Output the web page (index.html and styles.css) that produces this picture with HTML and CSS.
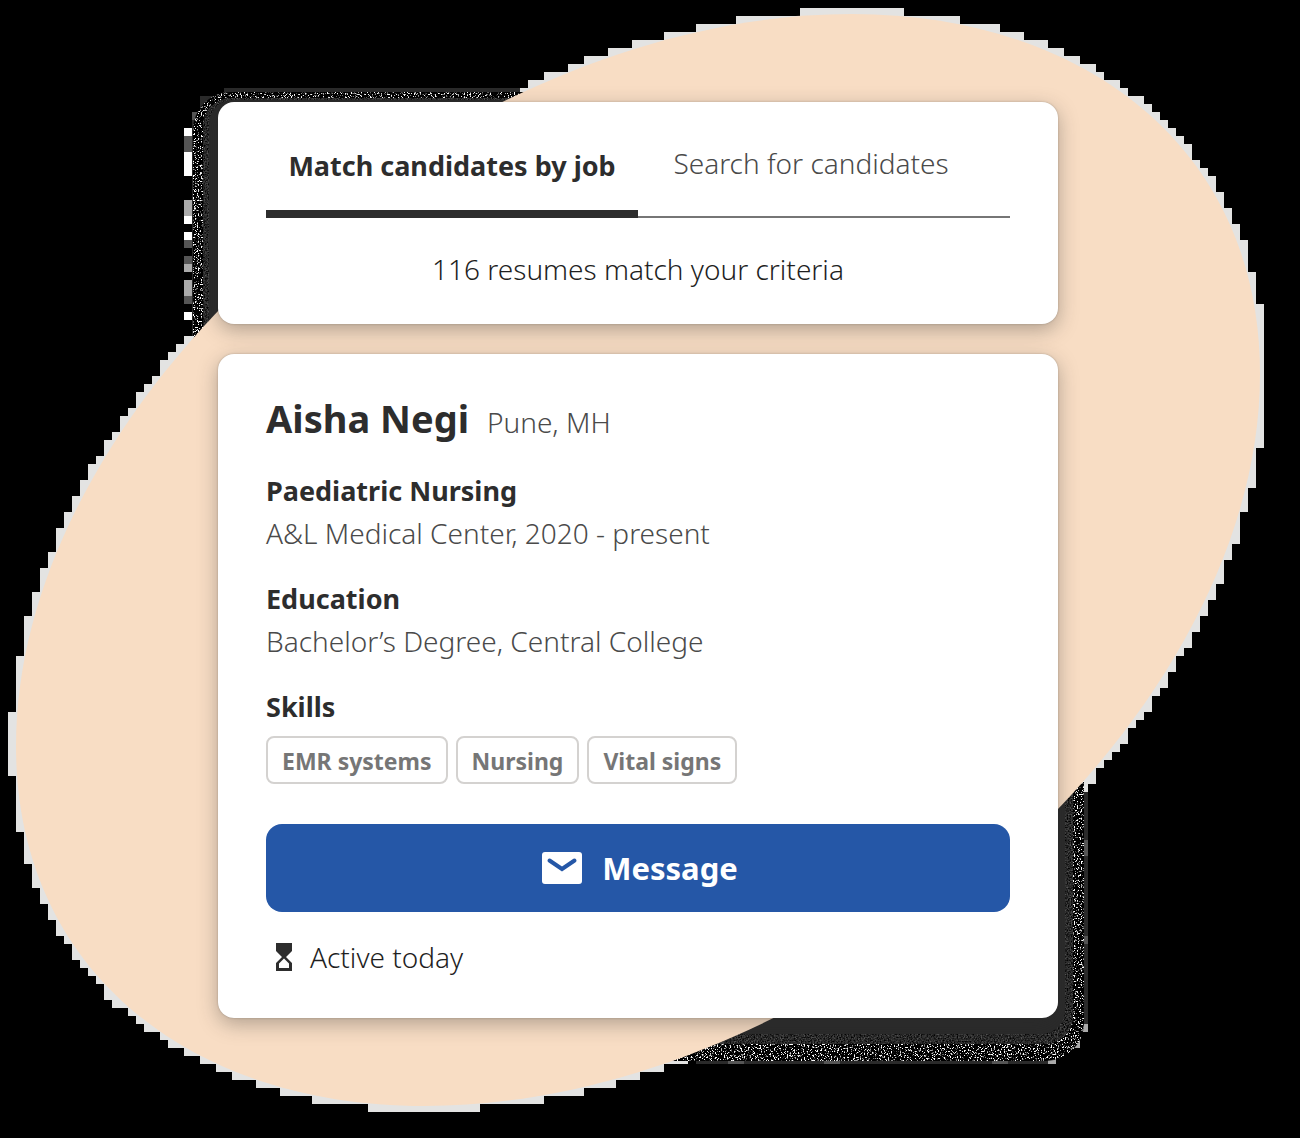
FILE: index.html
```
<!DOCTYPE html>
<html lang="en">
<head>
<meta charset="utf-8">
<meta name="viewport" content="width=device-width, initial-scale=1">
<title>Match candidates</title>
<link rel="stylesheet" href="styles.css">
</head>
<body>
<main class="stage">
  <svg class="backdrop" viewBox="0 0 1300 1138" aria-hidden="true">
    <defs>
      <filter id="grain" x="0" y="0" width="1300" height="1138" filterUnits="userSpaceOnUse" color-interpolation-filters="sRGB">
        <feTurbulence type="fractalNoise" baseFrequency="0.7" numOctaves="2" seed="4"/>
        <feColorMatrix type="matrix" values="9 0 0 0 -5  9 0 0 0 -5  9 0 0 0 -5  0 0 0 0 1"/>
        <feComposite in2="SourceGraphic" operator="in"/>
      </filter>
      <filter id="soft-grain" x="0" y="0" width="1300" height="1138" filterUnits="userSpaceOnUse" color-interpolation-filters="sRGB">
        <feTurbulence type="fractalNoise" baseFrequency="0.7" numOctaves="2" seed="9"/>
        <feColorMatrix type="matrix" values="0.6 0 0 0 -0.14  0.6 0 0 0 -0.14  0.6 0 0 0 -0.14  0 0 0 0 1"/>
        <feComposite in2="SourceGraphic" operator="in"/>
      </filter>
    </defs>
    <g class="steps" id="steps" shape-rendering="crispEdges"></g>
    <g shape-rendering="crispEdges">
      <path fill="#2a2a2a" d="M224 88H520V96H224ZM200 96H224V112H200ZM192 112H200V336H192ZM1080 792H1088V1032H1080ZM1072 1032H1080V1048H1072ZM696 1056H1056V1064H696Z"/>
      <path fill="#555" d="M184 136h8v16h-8zM184 240h8v8h-8zM184 256h8v8h-8zM184 296h8v8h-8zM192 112h8v8h-8zM1080 840h8v16h-8zM1080 936h8v8h-8zM728 1056h16v8h-16zM824 1056h16v8h-16zM992 1056h16v8h-16z"/>
      <path fill="#aaa" d="M184 200h8v16h-8zM184 264h8v8h-8zM184 280h8v16h-8zM1080 1024h8v8h-8zM1072 1040h8v8h-8zM1048 1056h8v8h-8z"/>
      <path fill="#fff" d="M184 128h8v8h-8zM184 152h8v24h-8zM184 216h8v8h-8zM184 232h8v8h-8zM184 312h8v8h-8z"/>
    </g>
    <rect x="193" y="92" width="891" height="969" rx="38" filter="url(#grain)"/>
    <rect x="203" y="98" width="870" height="946" rx="28" filter="url(#soft-grain)"/>
    <rect x="209" y="100" width="856" height="934" rx="24" fill="#2a2a2a"/>
    <path class="blob" id="blob" d="M852 14C1083 14 1260 147 1260 374C1260 730 820 1106 424 1106C193 1106 16 973 16 746C16 390 456 14 852 14Z"/>
  </svg>

  <section class="card card-search">
    <div class="tabs" role="tablist">
      <button class="tab tab-active" type="button" role="tab" aria-selected="true">Match candidates by job</button>
      <button class="tab" type="button" role="tab" aria-selected="false">Search for candidates</button>
    </div>
    <p class="result">116 resumes match your criteria</p>
  </section>

  <article class="card card-profile">
    <header class="person">
      <h1 class="name">Aisha Negi</h1>
      <span class="detail">Pune, MH</span>
    </header>
    <section class="entry">
      <h2 class="label">Paediatric Nursing</h2>
      <p class="detail">A&amp;L Medical Center, 2020 - present</p>
    </section>
    <section class="entry">
      <h2 class="label">Education</h2>
      <p class="detail">Bachelor’s Degree, Central College</p>
    </section>
    <section class="entry">
      <h2 class="label">Skills</h2>
      <ul class="skills">
        <li class="skill">EMR systems</li>
        <li class="skill">Nursing</li>
        <li class="skill">Vital signs</li>
      </ul>
    </section>
    <button class="message" type="button">
      <svg width="40" height="32" viewBox="0 0 40 32" aria-hidden="true">
        <rect width="40" height="32" rx="3" fill="#fff"/>
        <path d="M7.500 8.500L20 17L32.500 8.500" fill="none" stroke="#2557a7" stroke-width="4" stroke-linecap="round"/>
      </svg>
      <span>Message</span>
    </button>
    <p class="activity">
      <svg width="16" height="28" viewBox="0 0 16 28" aria-hidden="true">
        <path fill="#2d2d2d" fill-rule="evenodd" d="M0 0H16V8L10 14L16 20V28H0V20L6 14L0 8ZM8 15.500L3 20.500V25H13V20.500Z"/>
      </svg>
      <span>Active today</span>
    </p>
  </article>
</main>
<script src="steps.js"></script>
</body>
</html>
```
FILE: steps.js
```
// Draws the stepped rim: every 8px cell that the blob touches.
const blob = document.getElementById('blob');
const steps = document.getElementById('steps');
const cell = 8;
const ns = 'http://www.w3.org/2000/svg';
const total = blob.getTotalLength();
const rows = new Map();
for (let d = 0; d < total; d += 1) {
  const p = blob.getPointAtLength(d);
  const row = Math.floor(p.y / cell);
  const from = Math.floor((p.x - 1) / cell);
  const to = Math.floor((p.x + 1) / cell);
  const span = rows.get(row) || [from, to];
  rows.set(row, [Math.min(span[0], from), Math.max(span[1], to)]);
}
let path = '';
rows.forEach(([from, to], row) => {
  path += `M${from * cell} ${row * cell}H${(to + 1) * cell}v${cell}H${from * cell}Z`;
});
const shape = document.createElementNS(ns, 'path');
shape.setAttribute('d', path);
steps.appendChild(shape);
```
FILE: styles.css
```
* { box-sizing: border-box; }

body {
  margin: 0;
  background: #000;
  color: #2d2d2d;
  font-family: "Noto Sans", "Open Sans", sans-serif;
  font-size: 28px;
  font-weight: 300;
  line-height: 42px;
}

h1, h2, p, ul { margin: 0; padding: 0; }
svg { display: block; }
button { font: inherit; border: 0; cursor: pointer; }

.stage {
  position: relative;
  display: flex;
  flex-direction: column;
  gap: 30px;
  min-height: 100vh;
  padding: 102px 242px 120px 218px;
}

.backdrop {
  position: absolute;
  top: 0;
  left: 0;
  width: 100%;
}

.blob { fill: #f8ddc4; }
.steps { fill: #e3e3e2; }

.card {
  position: relative;
  background: #fff;
  border-radius: 16px;
  box-shadow: 0 0 2px rgba(45, 45, 45, 0.3), 0 6px 20px rgba(45, 45, 45, 0.35);
}

.card-search { padding: 24px 48px 34px; }

.tabs { display: grid; grid-template-columns: 1fr 1fr; }

.tab {
  height: 92px;
  padding: 0 26px 16px 0;
  background: none;
  border-bottom: 2px solid #767676;
  color: #4a4a4a;
  white-space: nowrap;
}

.tab-active {
  padding: 0 0 4px;
  border-bottom: 8px solid #2d2d2d;
  color: #2d2d2d;
  font-size: 27px;
  font-weight: 700;
}

.result {
  margin-top: 30px;
  color: #1f1f1f;
  text-align: center;
}

.card-profile { padding: 36px 48px 40px; }

.person { display: flex; align-items: baseline; gap: 18px; }
.name { font-size: 38px; line-height: 56px; font-weight: 700; }
.detail { color: #4a4a4a; }

.entry { margin-top: 24px; }
.label { font-size: 27px; line-height: 42px; font-weight: 700; }

.skills { display: flex; gap: 8px; margin-top: 8px; list-style: none; }

.skill {
  height: 48px;
  padding: 0 14px;
  border: 2px solid #d4d2d0;
  border-radius: 8px;
  color: #767676;
  font-size: 23px;
  line-height: 46px;
  font-weight: 700;
}

.message {
  display: flex;
  align-items: center;
  justify-content: center;
  gap: 20px;
  width: 100%;
  height: 88px;
  margin-top: 40px;
  padding: 0 6px 0 10px;
  border-radius: 16px;
  background: #2557a7;
  color: #fff;
  font-size: 31px;
  font-weight: 700;
}

.activity {
  display: flex;
  align-items: center;
  gap: 18px;
  margin-top: 24px;
  padding-left: 10px;
  color: #1f1f1f;
}
```
